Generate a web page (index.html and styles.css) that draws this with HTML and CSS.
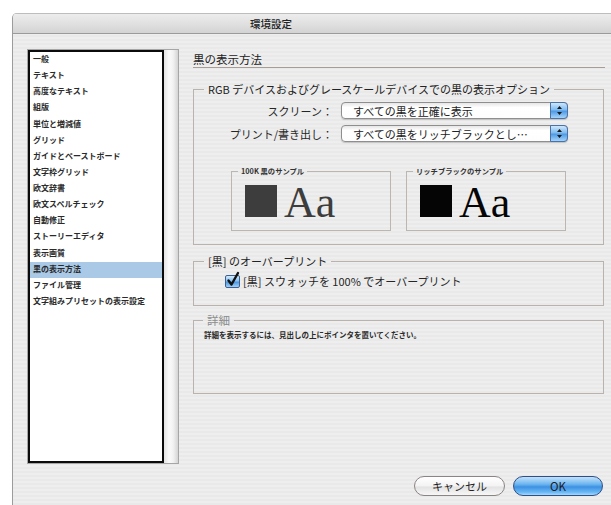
FILE: index.html
```html
<!DOCTYPE html>
<html lang="ja">
<head>
<meta charset="utf-8">
<title>環境設定</title>
<link rel="stylesheet" href="styles.css">
</head>
<body>
<div class="window">
  <div class="titlebar"><span class="title">環境設定</span></div>
  <div class="content">
    <div class="listbox">
      <ul class="list">
        <li>一般</li>
        <li>テキスト</li>
        <li>高度なテキスト</li>
        <li>組版</li>
        <li>単位と増減値</li>
        <li>グリッド</li>
        <li>ガイドとペーストボード</li>
        <li>文字枠グリッド</li>
        <li>欧文辞書</li>
        <li>欧文スペルチェック</li>
        <li>自動修正</li>
        <li>ストーリーエディタ</li>
        <li>表示画質</li>
        <li class="selected">黒の表示方法</li>
        <li>ファイル管理</li>
        <li>文字組みプリセットの表示設定</li>
      </ul>
      <div class="scrolltrack"></div>
    </div>

    <div class="panel">
      <div class="heading">黒の表示方法</div>

      <fieldset class="group group-rgb">
        <legend>RGB デバイスおよびグレースケールデバイスでの黒の表示オプション</legend>
        <div class="row">
          <span class="row-label">スクリーン：</span>
          <div class="popup">
            <span class="popup-text">すべての黒を正確に表示</span>
            <span class="stepper">
              <svg width="7" height="11" viewBox="0 0 7 11"><path d="M3.5 1 L6 4 L1 4 Z M3.5 10 L6 7 L1 7 Z" fill="#1a1a1a"/></svg>
            </span>
          </div>
        </div>
        <div class="row">
          <span class="row-label">プリント/書き出し：</span>
          <div class="popup">
            <span class="popup-text">すべての黒をリッチブラックとし…</span>
            <span class="stepper">
              <svg width="7" height="11" viewBox="0 0 7 11"><path d="M3.5 1 L6 4 L1 4 Z M3.5 10 L6 7 L1 7 Z" fill="#1a1a1a"/></svg>
            </span>
          </div>
        </div>
        <div class="samples">
          <fieldset class="sample">
            <legend>100K 黒のサンプル</legend>
            <div class="sample-body">
              <span class="swatch swatch-100k"></span>
              <span class="sample-text text-100k">Aa</span>
            </div>
          </fieldset>
          <fieldset class="sample">
            <legend>リッチブラックのサンプル</legend>
            <div class="sample-body">
              <span class="swatch swatch-rich"></span>
              <span class="sample-text text-rich">Aa</span>
            </div>
          </fieldset>
        </div>
      </fieldset>

      <fieldset class="group group-overprint">
        <legend>[黒] のオーバープリント</legend>
        <label class="check-row">
          <span class="checkbox">
            <svg width="16" height="18" viewBox="0 0 16 18">
              <path d="M3.5 9.5 L6.5 13.5 L13 2" fill="none" stroke="#111" stroke-width="2.4" stroke-linecap="round" stroke-linejoin="round"/>
            </svg>
          </span>
          <span>[黒] スウォッチを 100% でオーバープリント</span>
        </label>
      </fieldset>

      <fieldset class="group group-details">
        <legend>詳細</legend>
        <p class="details-text">詳細を表示するには、見出しの上にポインタを置いてください。</p>
      </fieldset>

      <div class="buttons">
        <button class="btn btn-cancel">キャンセル</button>
        <button class="btn btn-ok">OK</button>
      </div>
    </div>
  </div>
</div>
</body>
</html>
```
FILE: styles.css
```css
html, body {
  margin: 0;
  padding: 0;
  background: #ffffff;
  overflow: hidden;
}

body {
  width: 611px;
  height: 505px;
  font-family: "Noto Sans CJK JP", "Noto Sans", sans-serif;
  color: #1e1e1e;
}

/* dialog window */
.window {
  margin: 13px 0 0 12px;
  width: 599px;
  height: 492px;
  border-left: 1px solid #9c9c9c;
  border-top-left-radius: 5px;
  overflow: hidden;
  background: repeating-linear-gradient(#eeeeee 0 2px, #e9e9e9 2px 4px);
  box-sizing: border-box;
}

.titlebar {
  height: 21px;
  box-sizing: border-box;
  border-top: 1px solid #bdbdbd;
  border-bottom: 1px solid #9a9a9a;
  background: linear-gradient(#ededed, #dedede 60%, #d3d3d3);
  padding-left: 237px;
  font-size: 10.5px;
  line-height: 19px;
  font-weight: 500;
  color: #222;
}

.content {
  display: flex;
  align-items: flex-start;
  padding: 15px 0 0 14px;
}

/* category list */
.listbox {
  display: flex;
  width: 152px;
  height: 415px;
  border: 1px solid #a6a6a6;
  box-sizing: border-box;
  background: #fff;
}

.list {
  list-style: none;
  margin: 0;
  padding: 0;
  width: 136px;
  height: 413px;
  box-sizing: border-box;
  border: 2px solid #0b0b0b;
  background: #fff;
  font-size: 8px;
  font-weight: 700;
  color: #2a2a2a;
}

.list li {
  height: 16.13px;
  line-height: 14px;
  padding-left: 3px;
  white-space: nowrap;
}

.list li.selected {
  background: #a9c9e6;
}

.scrolltrack {
  width: 14px;
  background: linear-gradient(90deg, #e4e4e4, #fbfbfb 35%, #f2f2f2 65%, #d4d4d4);
}

/* right side settings */
.panel {
  display: flex;
  flex-direction: column;
  width: 412px;
  margin-left: 14px;
  padding-top: 3px;
}

.heading {
  font-size: 11.5px;
  line-height: 14px;
  padding-bottom: 1px;
  border-bottom: 1px solid #a79d96;
  color: #222;
}

.group {
  margin: 15px 1px 0 0;
  padding: 0 0 0 10px;
  border: 1px solid #bab2ac;
  min-width: 0;
}

.group > legend {
  padding: 0 4px;
  font-size: 11px;
  line-height: 12px;
  color: #222;
}

.row {
  display: flex;
  align-items: center;
  height: 17px;
  font-size: 11px;
}

.group-rgb .row:first-of-type {
  margin-top: 7px;
}

.row + .row {
  margin-top: 6px;
}

.row-label {
  width: 129px;
  text-align: right;
  white-space: nowrap;
  color: #262626;
}

.popup {
  display: flex;
  align-items: center;
  justify-content: space-between;
  margin-left: 8px;
  width: 227px;
  height: 17px;
  box-sizing: border-box;
  border: 1px solid #8e8e8e;
  border-radius: 4px;
  background: linear-gradient(#e6e6e6, #ffffff 30%, #fdfdfd);
  box-shadow: 0 1px 1px rgba(0, 0, 0, 0.18);
  padding-left: 11px;
}

.popup-text {
  white-space: nowrap;
  color: #222;
}

.stepper {
  display: flex;
  align-items: center;
  justify-content: center;
  width: 18px;
  height: 17px;
  margin: -1px -1px -1px 0;
  box-sizing: border-box;
  border: 1px solid #4a72a8;
  border-radius: 0 4px 4px 0;
  background: linear-gradient(#cfe6fb, #7fbcf0 45%, #4f9ae6 55%, #a4d4fa);
}

/* sample swatches */
.samples {
  display: flex;
  gap: 15px;
  margin: 25px 0 13px 27px;
}

.sample {
  width: 160px;
  box-sizing: border-box;
  margin: 0;
  padding: 9px 0 9px 6px;
  border: 1px solid #bdb5af;
  min-width: 0;
}

.sample > legend {
  padding: 0 3px;
  font-size: 7.3px;
  line-height: 9px;
  font-weight: 700;
  color: #333;
}

.sample-body {
  display: flex;
  align-items: baseline;
  gap: 7px;
  padding-left: 7px;
}

.swatch {
  display: inline-block;
  width: 32px;
  height: 32px;
}

.swatch-100k { background: #3d3d3d; }
.swatch-rich { background: #050505; }

.sample-text {
  font-family: "Liberation Serif", "Times New Roman", serif;
  font-size: 44px;
  line-height: 36px;
}

.text-100k { color: #3d3d3d; }
.text-rich { color: #050505; }

/* overprint */
.group-overprint {
  margin-top: 10px;
}

.check-row {
  display: flex;
  align-items: center;
  gap: 3px;
  margin: 7px 0 17px 21px;
  font-size: 11px;
  line-height: 14px;
  color: #262626;
}

.checkbox {
  position: relative;
  width: 15px;
  height: 13px;
  box-sizing: border-box;
  border: 1px solid #3c5f8f;
  border-radius: 2px;
  background: linear-gradient(#d4ebfd, #86c2f2 45%, #4c97e2 55%, #9fd1f8);
}

.checkbox svg {
  position: absolute;
  left: -1px;
  top: -5px;
}

/* details */
.group-details {
  margin-top: 9px;
  padding-left: 9px;
}

.group-details > legend {
  color: #8c8c8c;
  font-size: 11.5px;
  line-height: 11px;
}

.details-text {
  margin: 4px 0 53px 1px;
  font-size: 7.5px;
  line-height: 10px;
  font-weight: 700;
  color: #2a2a2a;
}

/* dialog buttons */
.buttons {
  display: flex;
  justify-content: flex-end;
  gap: 8px;
  margin-top: 82px;
  padding-right: 2px;
}

.btn {
  height: 20px;
  box-sizing: border-box;
  border-radius: 10px;
  font-family: "Noto Sans CJK JP", "Noto Sans", sans-serif;
  font-size: 11px;
  line-height: 16px;
  padding: 0;
  color: #1e1e1e;
}

.btn-cancel {
  width: 91px;
  border: 1px solid #8a8482;
  background: linear-gradient(#ffffff, #f3f3f3 50%, #e2e2e2 55%, #f7f7f7);
}

.btn-ok {
  width: 90px;
  border: 1px solid #2f4f86;
  background: linear-gradient(#c4e2fb, #6db5f0 40%, #3d91e3 55%, #6ab9f6 85%, #a7d8fb);
  font-size: 11.5px;
}
```
